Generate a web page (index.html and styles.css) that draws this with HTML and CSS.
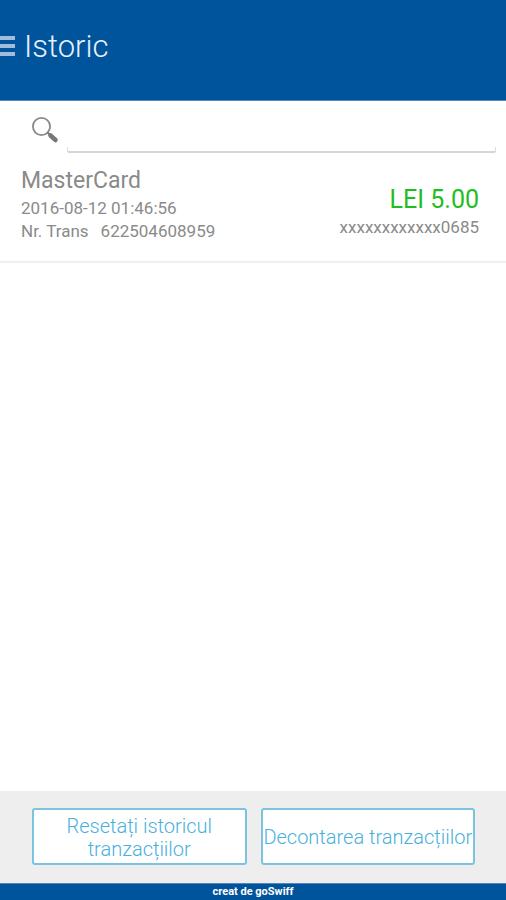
FILE: index.html
```html
<!DOCTYPE html>
<html lang="ro">
<head>
  <meta charset="UTF-8">
  <meta name="viewport" content="width=device-width, initial-scale=1.0">
  <title>Istoric</title>
  <link rel="stylesheet" href="styles.css">
</head>
<body>
  <header class="top-bar">
    <button type="button" class="menu-button" aria-label="Meniu">
      <svg width="15" height="24" viewBox="0 0 15 24" fill="#a3bbdc">
        <rect y="1" width="15" height="4"/>
        <rect y="9" width="15" height="4"/>
        <rect y="17" width="15" height="4"/>
      </svg>
    </button>
    <h1>Istoric</h1>
  </header>

  <main>
    <form class="search" role="search">
      <label for="search-input" aria-label="Caută">
        <svg width="28" height="28" viewBox="0 0 28 28" fill="none">
          <circle cx="10.5" cy="9.5" r="8.6" stroke="#8a8a8a" stroke-width="1.8"/>
          <path d="M16.5 15.5l3 3" stroke="#777" stroke-width="2"/>
          <path d="M19.5 18.5l5 4.5" stroke="#777" stroke-width="4.5" stroke-linecap="round"/>
        </svg>
      </label>
      <input type="text" id="search-input">
    </form>

    <ul class="transactions">
      <li class="transaction">
        <div class="details">
          <h2>MasterCard</h2>
          <p>2016-08-12 01:46:56</p>
          <p class="number"><span>Nr. Trans</span><span>622504608959</span></p>
        </div>
        <div class="payment">
          <strong class="amount">LEI 5.00</strong>
          <p>xxxxxxxxxxxx0685</p>
        </div>
      </li>
    </ul>
  </main>

  <div class="actions">
    <button type="button">Resetați istoricul tranzacțiilor</button>
    <button type="button">Decontarea tranzacțiilor</button>
  </div>
  <footer>creat de goSwiff</footer>
</body>
</html>
```

FILE: styles.css
```css
* {
  box-sizing: border-box;
}

body {
  margin: 0;
  min-height: 100vh;
  display: flex;
  flex-direction: column;
  font-family: Roboto, sans-serif;
  background-color: #fff;
  color: #8a8a8a;
}

h1,
h2,
p,
ul {
  margin: 0;
  padding: 0;
}

button {
  font-family: inherit;
  cursor: pointer;
}

.top-bar {
  display: flex;
  align-items: center;
  gap: 9px;
  padding: 28px 0 34px;
  background-color: #00549c;
  border-bottom: 1px solid #5a83bd;
}

.top-bar h1 {
  font-size: 31px;
  line-height: 38px;
  font-weight: 300;
  color: #e8f0fa;
}

.menu-button {
  display: flex;
  padding: 0;
  border: none;
  background: none;
}

main {
  flex: 1;
}

.search {
  display: flex;
  align-items: flex-end;
  gap: 8px;
  padding: 12px 10px 0 31px;
}

.search label {
  display: flex;
  padding-bottom: 8px;
}

.search input {
  flex: 1;
  min-width: 0;
  height: 40px;
  padding: 0 8px;
  border: none;
  outline: none;
  font-family: inherit;
  font-size: 18px;
  color: #8a8a8a;
  /* field edge is only drawn along the bottom and its two corners */
  background:
    linear-gradient(#d6d6d6, #d6d6d6) left bottom / 100% 2px no-repeat,
    linear-gradient(#ddd, #ddd) left bottom / 1px 6px no-repeat,
    linear-gradient(#ddd, #ddd) right bottom / 1px 6px no-repeat;
  border-radius: 0 0 2px 2px;
}

.transactions {
  list-style: none;
}

.transaction {
  display: flex;
  align-items: center;
  justify-content: space-between;
  padding: 14px 27px 18px 21px;
  border-bottom: 2px solid #f0f0f0;
}

.transaction h2 {
  font-size: 23px;
  line-height: 28px;
  padding-bottom: 2px;
  font-weight: 400;
}

.transaction p {
  font-size: 17px;
  line-height: 23px;
}

.number {
  display: flex;
  gap: 12px;
}

.payment {
  padding-top: 12px;
  text-align: right;
}

.amount {
  display: block;
  font-size: 25px;
  line-height: 32px;
  font-weight: 400;
  color: #1fbe1f;
}

.actions {
  display: flex;
  gap: 14px;
  padding: 17px 31px 18px 32px;
  background-color: #eee;
}

.actions button {
  flex: 1 1 0;
  min-width: 0;
  min-height: 57px;
  padding: 2px 0 0;
  border: 2px solid #7dc3e1;
  border-radius: 3px;
  background-color: #fff;
  font-size: 20px;
  line-height: 23px;
  font-weight: 300;
  color: #49b0dc;
}

footer {
  border-top: 1px solid #5a83bd;
  background-color: #00549c;
  font-size: 11px;
  line-height: 16px;
  font-weight: 700;
  text-align: center;
  color: #fff;
}
```
